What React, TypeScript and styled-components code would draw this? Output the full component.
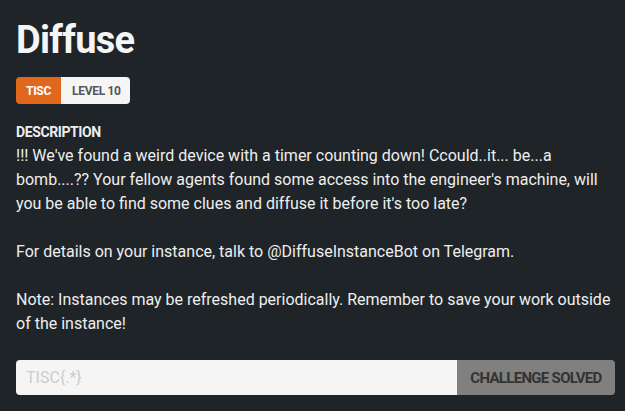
import React from "react";
import styled, { createGlobalStyle } from "styled-components";

const Global = createGlobalStyle`
  html, body { margin: 0; padding: 0; background: #1e2428; }
  body { font-family: Roboto, "Noto Sans", sans-serif; color: #eeeeee; }
  * { box-sizing: border-box; }
`;

const Page = styled.div`
  padding: 17px 10px 0 16px;
  display: flex;
  flex-direction: column;
`;

const Title = styled.h1`
  margin: 0;
  font-family: Roboto, sans-serif;
  font-weight: 700;
  font-size: 38px;
  line-height: 46px;
  letter-spacing: -0.7px;
  color: #f5f5f5;
`;

const Tags = styled.div`
  display: flex;
  margin-top: 14px;
`;

const Tag = styled.span<{ $accent?: boolean }>`
  display: inline-flex;
  align-items: center;
  height: 27px;
  padding: 0 ${(p) => (p.$accent ? "10px" : "9px")} 0 ${(p) => (p.$accent ? "10px" : "11px")};
  font-family: Roboto, sans-serif;
  font-weight: 700;
  font-size: 12px;
  letter-spacing: -0.3px;
  background: ${(p) => (p.$accent ? "#e0681d" : "#f5f5f5")};
  color: ${(p) => (p.$accent ? "#ffffff" : "#555555")};
  border-radius: ${(p) => (p.$accent ? "4px 0 0 4px" : "0 4px 4px 0")};
`;

const Label = styled.div`
  margin: 19px 0 3px;
  font-family: Roboto, sans-serif;
  font-weight: 700;
  font-size: 14px;
  line-height: 18px;
  letter-spacing: -0.4px;
  color: #eeeeee;
`;

const Para = styled.p`
  margin: 0 0 24px;
  font-size: 16px;
  line-height: 24px;
  color: #eeeeee;
`;

const Form = styled.div`
  display: flex;
  height: 35px;
`;

const Input = styled.input`
  flex: 1;
  min-width: 0;
  border: 0;
  outline: none;
  background: #f5f5f5;
  border-radius: 4px 0 0 4px;
  padding: 0 10px;
  font-family: Roboto, sans-serif;
  font-size: 16px;
  color: #333;
  &::placeholder { color: #cccccc; }
`;

const Button = styled.button`
  width: 158px;
  border: 0;
  padding: 0;
  background: #808080;
  color: #333333;
  border-radius: 0 4px 4px 0;
  white-space: nowrap;
  font-family: Roboto, sans-serif;
  font-weight: 700;
  font-size: 15px;
  letter-spacing: -0.7px;
`;

export default function App() {
  return (
    <>
      <Global />
      <Page>
        <Title>Diffuse</Title>
        <Tags>
          <Tag $accent>TISC</Tag>
          <Tag>LEVEL 10</Tag>
        </Tags>
        <Label>DESCRIPTION</Label>
        <Para>
          !!! We've found a weird device with a timer counting down! Ccould..it... be...a bomb....?? Your fellow agents found some access into the engineer's machine, will you be able to find some clues and diffuse it before it's too late?
        </Para>
        <Para>For details on your instance, talk to @DiffuseInstanceBot on Telegram.</Para>
        <Para>Note: Instances may be refreshed periodically. Remember to save your work outside of the instance!</Para>
        <Form>
          <Input placeholder="TISC{.*}" />
          <Button>CHALLENGE SOLVED</Button>
        </Form>
      </Page>
    </>
  );
}
